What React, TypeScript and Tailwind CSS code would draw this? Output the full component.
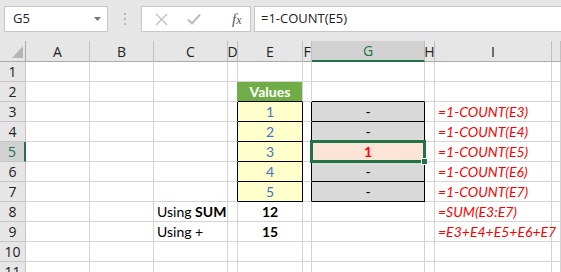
import React from 'react';

const COLS = ['', 'A', 'B', 'C', 'D', 'E', 'F', 'G', 'H', 'I', ''];
const ROWS = [1, 2, 3, 4, 5, 6, 7, 8, 9, 10, 11];

const cellFont = { fontFamily: 'Lato, "Liberation Sans", sans-serif' };

type Cell = { cls?: string; color?: string; content?: React.ReactNode };

// per-cell overrides, keyed like "E3"
const cells: Record<string, Cell> = {
  D2: { cls: 'border-r-[#70ad47]' },
  D3: { cls: 'border-r-black' },
  D4: { cls: 'border-r-black' },
  D5: { cls: 'border-r-black' },
  D6: { cls: 'border-r-black' },
  D7: { cls: 'border-r-black' },
  E2: { cls: 'bg-[#70ad47] border-b-black font-bold justify-center', color: 'text-white', content: 'Values' },
  E3: { cls: 'bg-[#ffffcc] border-r-black border-b-black justify-center', color: 'text-[#4472c4]', content: '1' },
  E4: { cls: 'bg-[#ffffcc] border-r-black border-b-black justify-center', color: 'text-[#4472c4]', content: '2' },
  E5: { cls: 'bg-[#ffffcc] border-r-black border-b-black justify-center', color: 'text-[#4472c4]', content: '3' },
  E6: { cls: 'bg-[#ffffcc] border-r-black border-b-black justify-center', color: 'text-[#4472c4]', content: '4' },
  E7: { cls: 'bg-[#ffffcc] border-r-black border-b-black justify-center', color: 'text-[#4472c4]', content: '5' },
  F3: { cls: 'border-r-black' },
  F4: { cls: 'border-r-black' },
  F5: { cls: 'border-r-black' },
  F6: { cls: 'border-r-black' },
  F7: { cls: 'border-r-black' },
  G2: { cls: 'border-b-black' },
  G3: { cls: 'bg-[#d9d9d9] border-r-black border-b-black justify-center', content: '-' },
  G4: { cls: 'bg-[#d9d9d9] border-r-black border-b-black justify-center', content: '-' },
  G5: {
    cls: 'bg-[#fce4d6] border-r-black border-b-black justify-center font-bold relative',
    color: 'text-[#ff0000]',
    content: (
      <>
        1
        <div className="absolute -left-[2px] -top-[2px] -right-[2px] -bottom-[2px] border-[3px] border-[#217346]" />
        <div className="absolute -right-[4px] -bottom-[4px] w-[7px] h-[7px] bg-[#217346] border border-white" />
      </>
    ),
  },
  G6: { cls: 'bg-[#d9d9d9] border-r-black border-b-black justify-center', content: '-' },
  G7: { cls: 'bg-[#d9d9d9] border-r-black border-b-black justify-center', content: '-' },
  C8: { cls: 'pl-[3px]', content: <span>Using <b>SUM</b></span> },
  C9: { cls: 'pl-[3px]', content: 'Using +' },
  E8: { cls: 'justify-center font-bold', content: '12' },
  E9: { cls: 'justify-center font-bold', content: '15' },
  I3: { cls: 'pl-[3px] italic', color: 'text-[#ff0000]', content: '=1-COUNT(E3)' },
  I4: { cls: 'pl-[3px] italic', color: 'text-[#ff0000]', content: '=1-COUNT(E4)' },
  I5: { cls: 'pl-[3px] italic', color: 'text-[#ff0000]', content: '=1-COUNT(E5)' },
  I6: { cls: 'pl-[3px] italic', color: 'text-[#ff0000]', content: '=1-COUNT(E6)' },
  I7: { cls: 'pl-[3px] italic', color: 'text-[#ff0000]', content: '=1-COUNT(E7)' },
  I8: { cls: 'pl-[3px] italic', color: 'text-[#ff0000]', content: '=SUM(E3:E7)' },
  I9: { cls: 'pl-[3px] italic', color: 'text-[#ff0000]', content: '=E3+E4+E5+E6+E7' },
};

function FormulaBar() {
  return (
    <div
      className="h-[41px] bg-[#e6e6e6] flex items-start pt-[6px] pl-[4px]"
      style={{ fontFamily: '"Open Sans", "Liberation Sans", sans-serif' }}
    >
      <div className="w-[104px] h-[26px] bg-white border border-[#c6c6c6] flex items-center justify-between pl-[8px] pr-[6px] text-[13px] text-[#222]">
        <span>G5</span>
        <svg width="7" height="4" viewBox="0 0 7 4">
          <path d="M0 0 H7 L3.5 4 Z" fill="#777" />
        </svg>
      </div>
      <div className="w-[33px] h-[26px] flex flex-col items-center justify-center gap-[3px]">
        <div className="w-[2px] h-[2px] bg-[#b5b5b5]" />
        <div className="w-[2px] h-[2px] bg-[#b5b5b5]" />
        <div className="w-[2px] h-[2px] bg-[#b5b5b5]" />
      </div>
      <div className="w-[110px] h-[26px] bg-white border border-[#c6c6c6] flex items-center">
        <svg width="13" height="13" viewBox="0 0 13 13" className="ml-[13px]">
          <path d="M1 1 L12 12 M12 1 L1 12" stroke="#bdbdbd" strokeWidth="1.3" />
        </svg>
        <svg width="14" height="12" viewBox="0 0 14 12" className="ml-[19px]">
          <path d="M1 6.5 L5 10.5 L13 1.5" stroke="#bdbdbd" strokeWidth="2" fill="none" />
        </svg>
        <span
          className="ml-[31px] text-[15px] italic text-[#555]"
          style={{ fontFamily: '"Liberation Serif", serif' }}
        >
          f<span className="text-[12px]">x</span>
        </span>
      </div>
      <div className="flex-1 h-[26px] ml-[3px] bg-white border border-r-0 border-[#c6c6c6] flex items-center pl-[6px] text-[13px] text-[#222]">
        =1-COUNT(E5)
      </div>
    </div>
  );
}

export default function App() {
  return (
    <div className="w-[561px] h-[272px] overflow-hidden bg-white">
      <FormulaBar />
      <div
        className="grid grid-cols-[26px_64px_64px_74px_10px_65px_9px_113px_10px_117px_1fr]"
        style={{ fontFamily: '"Open Sans", "Liberation Sans", sans-serif' }}
      >
        {/* column headers */}
        {COLS.map((c, i) =>
          i === 0 ? (
            <div key={i} className="h-[21px] bg-[#e6e6e6] border-r border-b border-[#ababab] relative">
              <svg width="11" height="12" viewBox="0 0 11 12" className="absolute right-[2px] bottom-[3px]">
                <path d="M11 0 V12 H0 Z" fill="#b5b5b5" />
              </svg>
            </div>
          ) : c === 'G' ? (
            <div
              key={i}
              className="h-[21px] bg-[#d2d2d2] border-r border-[#c0c0c0] border-b-2 border-b-[#217346] flex items-center justify-center text-[14px] text-[#217346]"
            >
              {c}
            </div>
          ) : (
            <div
              key={i}
              className="h-[21px] bg-[#e6e6e6] border-r border-[#c0c0c0] border-b border-b-[#ababab] flex items-center justify-center text-[14px] text-[#222]"
            >
              {c}
            </div>
          )
        )}
        {ROWS.map((r) =>
          COLS.map((c, i) => {
            if (i === 0) {
              return r === 5 ? (
                <div
                  key={`${r}-h`}
                  className="h-[20px] bg-[#d2d2d2] border-b border-[#c6c6c6] border-r-2 border-r-[#217346] flex items-center justify-center text-[14px] text-[#217346]"
                >
                  {r}
                </div>
              ) : (
                <div
                  key={`${r}-h`}
                  className="h-[20px] bg-[#e6e6e6] border-b border-r border-[#c6c6c6] flex items-center justify-center text-[14px] text-[#222]"
                >
                  {r}
                </div>
              );
            }
            const spec = cells[`${c}${r}`] || {};
            return (
              <div
                key={`${r}-${i}`}
                className={`h-[20px] border-r border-b border-[#d4d4d4] flex items-center text-[14px] whitespace-nowrap ${spec.color || 'text-black'} ${spec.cls || ''}`}
                style={cellFont}
              >
                {spec.content}
              </div>
            );
          })
        )}
      </div>
    </div>
  );
}
